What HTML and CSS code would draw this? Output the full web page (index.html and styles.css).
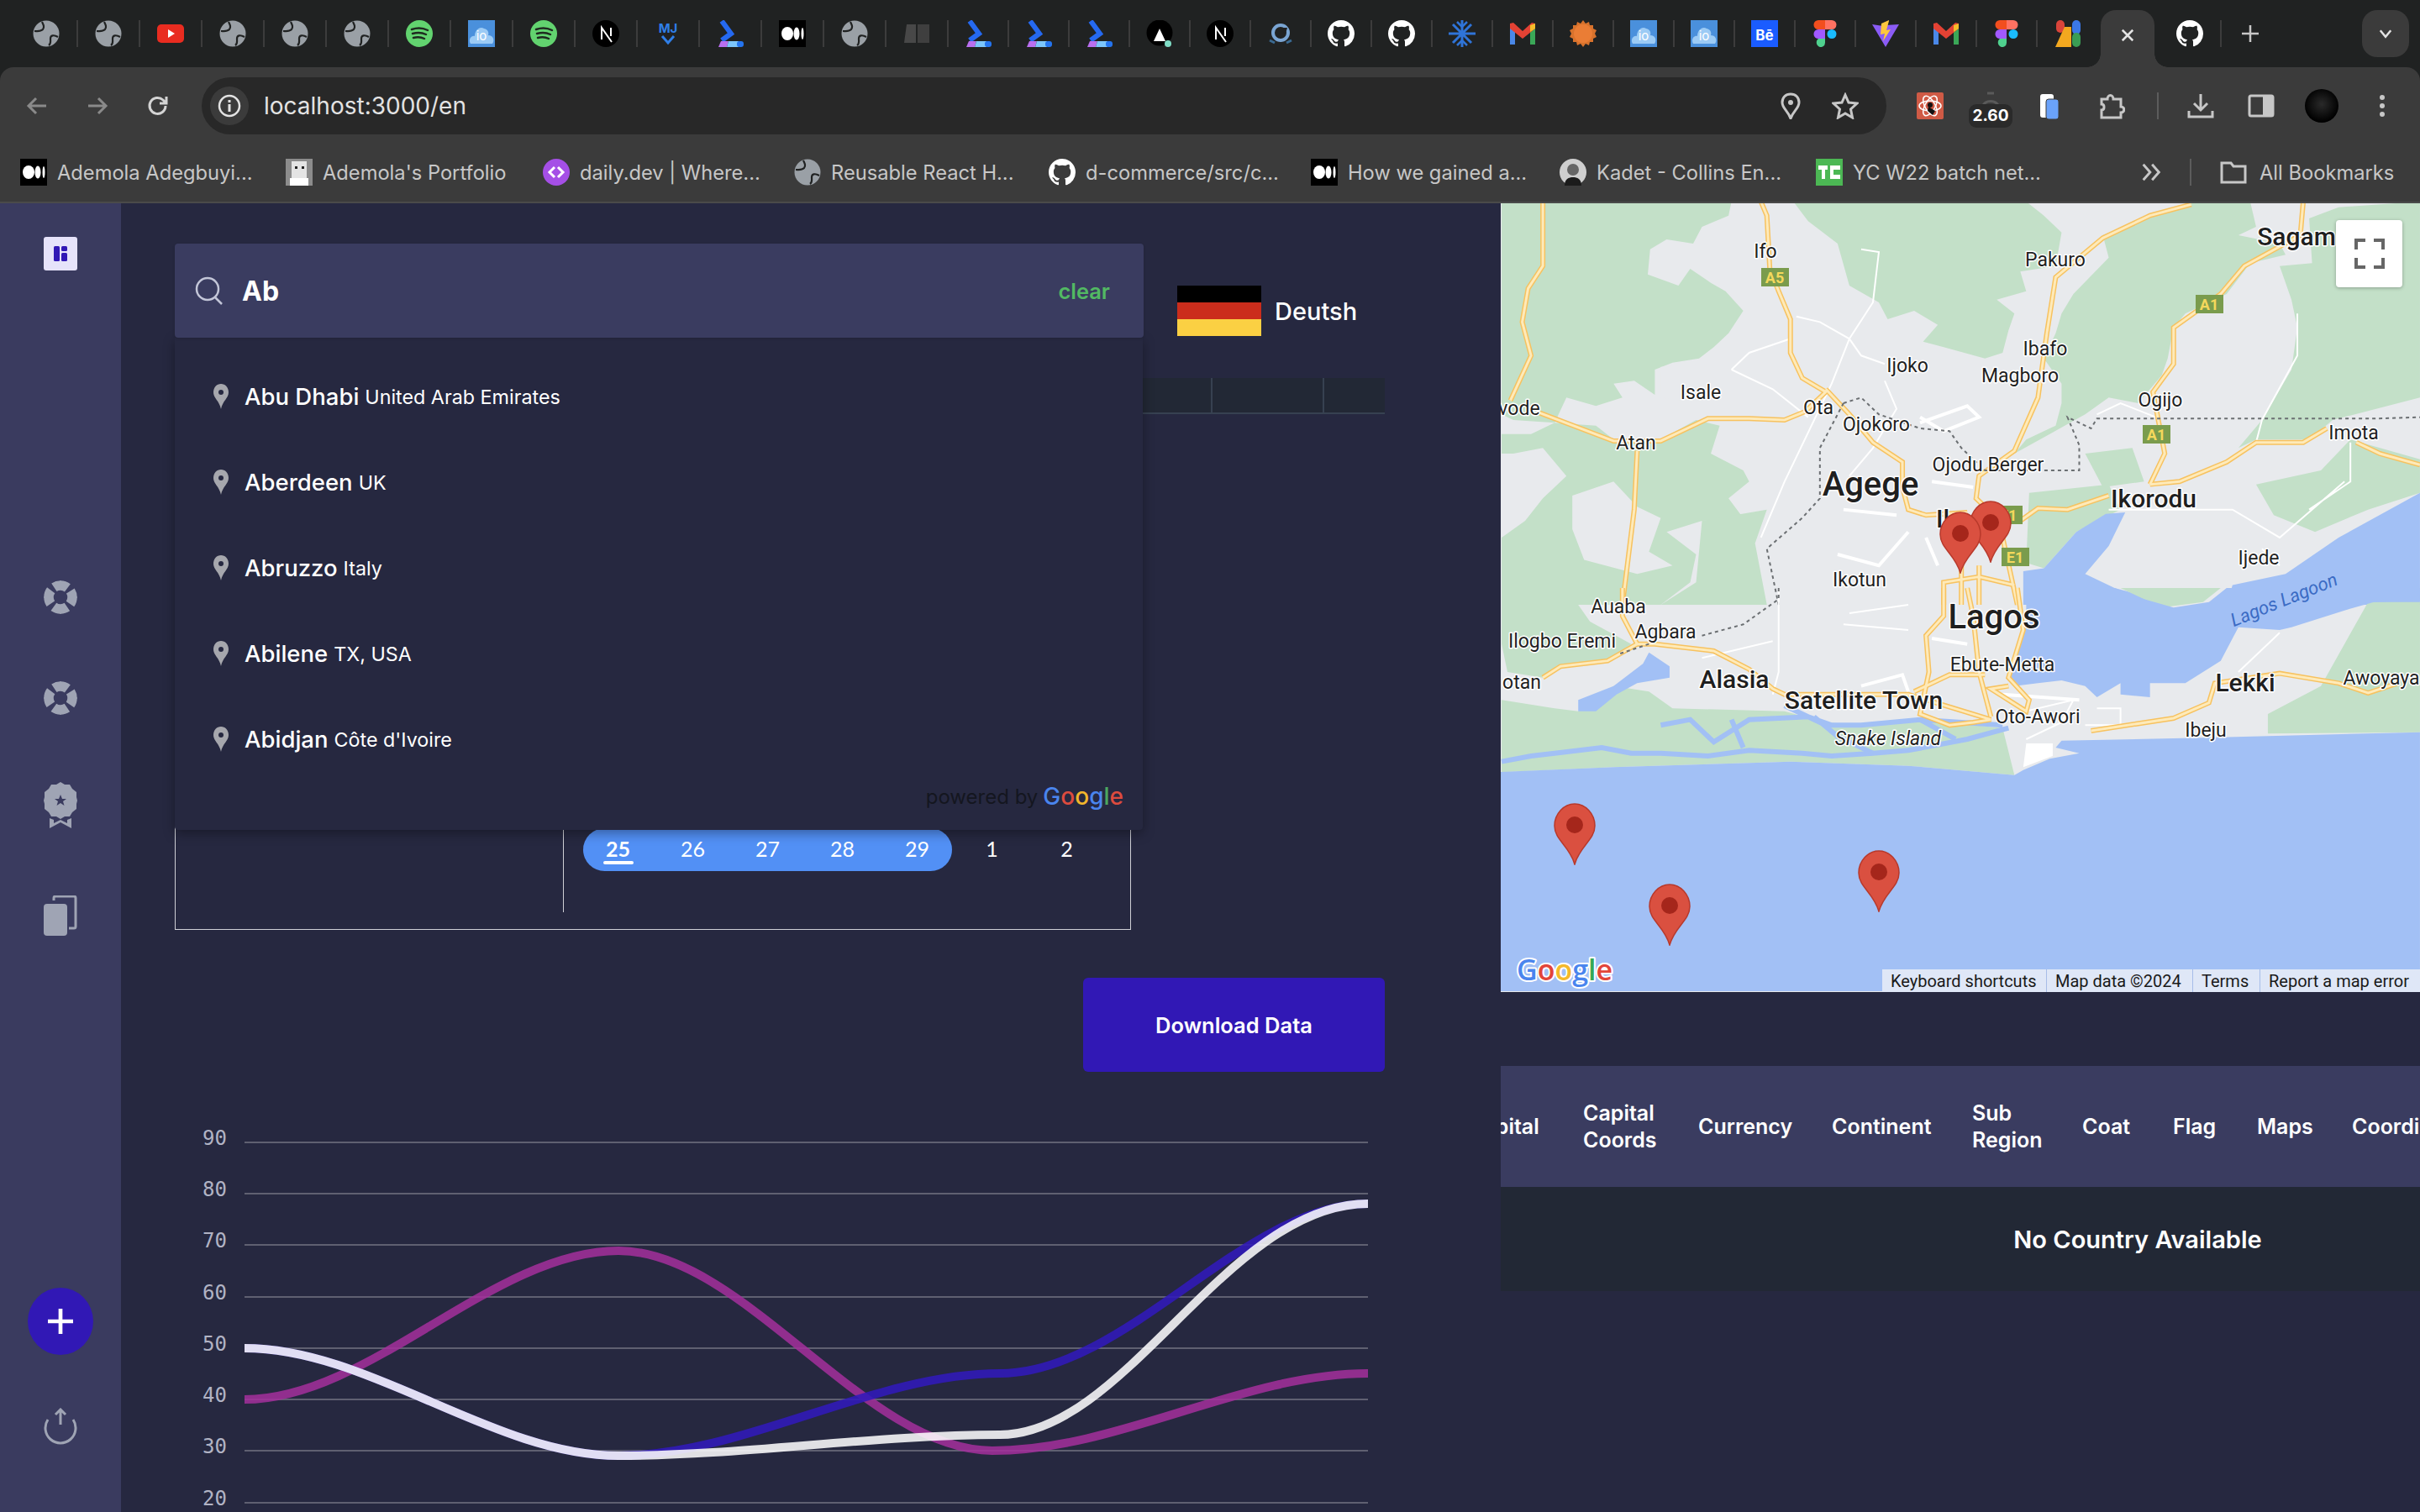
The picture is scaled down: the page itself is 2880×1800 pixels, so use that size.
FILE: index.html
```html
<!DOCTYPE html>
<html lang="en">
<head>
<meta charset="utf-8">
<title>Country dashboard</title>
<link rel="stylesheet" href="styles.css">
</head>
<body>
<svg class="sprites" width="0" height="0" aria-hidden="true">
  <symbol id="i-globe" viewBox="0 0 32 32"><circle cx="16" cy="16" r="15.5" fill="#9aa0a6"/><path d="M11 2c2 4 3 6 1 9-3 3-7 2-10 2M30 20c-5-3-9-2-9 2 0 4 1 6-2 8" fill="none" stroke="#202222" stroke-width="2.200"/><circle cx="16" cy="16" r="14" fill="none" stroke="#202222" stroke-width="0"/></symbol>
  <symbol id="i-yt" viewBox="0 0 32 32"><rect y="5" width="32" height="22" rx="5" fill="#e92c20"/><path d="M13 11l8 5-8 5z" fill="#fff"/></symbol>
  <symbol id="i-spotify" viewBox="0 0 32 32"><circle cx="16" cy="16" r="16" fill="#62d36f"/><path d="M7 11c6-2 13-2 19 1M8 16c5-1.500 11-1.500 16 1M9 21c4-1 9-1 13 1" fill="none" stroke="#1f2a20" stroke-width="2.500" stroke-linecap="round"/></symbol>
  <symbol id="i-io" viewBox="0 0 32 32"><rect width="32" height="32" fill="#4a90dc"/><path d="M3 28c-3-5 1-10 5-9 0-7 6-12 11-9 5 1 6 5 5 8 6 0 8 6 5 10z" fill="#9ccbf5"/></symbol>
  <symbol id="i-next" viewBox="0 0 32 32"><circle cx="16" cy="16" r="16" fill="#000"/><path d="M11 23V9l12 17M22 9v10" fill="none" stroke="#fff" stroke-width="2"/></symbol>
  <symbol id="i-tail" viewBox="0 0 32 32"><path d="M6 1l11 15L6 24" fill="none" stroke="#2569f0" stroke-width="6"/><path d="M2 32l3-7h9l-2 7z" fill="#b96ff0"/><path d="M12 32l2-7h12v7z" fill="#7cc6fb"/><rect x="24" y="25" width="8" height="7" rx="3" fill="#2474ef"/></symbol>
  <symbol id="i-medium" viewBox="0 0 32 32"><rect width="32" height="32" fill="#000"/><ellipse cx="10" cy="16" rx="7" ry="8" fill="#fff"/><ellipse cx="21" cy="16" rx="3.500" ry="7.500" fill="#fff"/><ellipse cx="28" cy="16" rx="1.500" ry="7" fill="#fff"/></symbol>
  <symbol id="i-gray" viewBox="0 0 32 32"><path d="M1 27L4 5h11v22z" fill="#484848"/><path d="M17 5h14v22H17z" fill="#3f3f3f"/></symbol>
  <symbol id="i-a" viewBox="0 0 32 32"><circle cx="16" cy="15" r="15.500" fill="#000"/><path d="M16 10l7 15H9z" fill="#fff"/><circle cx="26" cy="28" r="4" fill="#7fdcc5"/></symbol>
  <symbol id="i-spin" viewBox="0 0 32 32"><circle cx="16" cy="15" r="9" fill="none" stroke="#7aa5d3" stroke-width="4"/><path d="M3 24l6 3M29 24l-6 3" fill="none" stroke="#3a6a92" stroke-width="3"/><path d="M16 9l8 0-2 7-5-3z" fill="#202222"/></symbol>
  <symbol id="i-gh" viewBox="0 0 16 16"><path fill="#fff" d="M8 0C3.580 0 0 3.580 0 8c0 3.540 2.290 6.530 5.470 7.630.4.070.55-.17.55-.38 0-.19-.01-.82-.01-1.490-2.010.37-2.530-.49-2.690-.94-.09-.23-.48-.94-.82-1.130-.28-.15-.68-.52-.01-.53.63-.01 1.080.58 1.230.82.72 1.210 1.870.87 2.330.66.070-.52.28-.87.51-1.070-1.780-.2-3.640-.89-3.640-3.950 0-.87.31-1.590.82-2.150-.08-.2-.36-1.020.08-2.120 0 0 .67-.21 2.200.82.64-.18 1.320-.27 2-.27.68 0 1.360.09 2 .27 1.530-1.040 2.200-.82 2.200-.82.44 1.100.16 1.920.08 2.120.51.56.82 1.270.82 2.150 0 3.070-1.870 3.750-3.650 3.950.29.25.54.73.54 1.480 0 1.070-.01 1.930-.01 2.200 0 .21.15.46.55.38A8.013 8.013 0 0016 8c0-4.420-3.580-8-8-8z"/></symbol>
  <symbol id="i-snow" viewBox="0 0 32 32"><g fill="none" stroke="#2f74d8" stroke-width="3"><path d="M16 0v32M0 16h32M5 5l22 22M27 5L5 27"/></g><path d="M10 2l6 6 6-6M10 30l6-6 6 6" fill="none" stroke="#2f74d8" stroke-width="2.500"/></symbol>
  <symbol id="i-gmail" viewBox="0 0 32 32"><path d="M1 9v20h6V13z" fill="#4a88e8"/><path d="M31 9v20h-6V13z" fill="#3aa757"/><path d="M1 4v6l15 12 15-12V4l-4-1-11 10L5 3z" fill="#e34234"/><path d="M25 6l6-2v6l-6 4z" fill="#f4bd2a"/></symbol>
  <symbol id="i-sun" viewBox="0 0 32 32"><path d="M16 0l3 4 4-2 1 4 4 0 0 4 4 2-2 4 2 4-4 2 0 4-4 0-1 4-4-2-3 4-3-4-4 2-1-4-4 0 0-4-4-2 2-4-2-4 4-2 0-4 4 0 1-4 4 2z" fill="#d8722c"/><circle cx="16" cy="16" r="11" fill="#ea7d35"/></symbol>
  <symbol id="i-be" viewBox="0 0 32 32"><rect width="32" height="32" fill="#1a5cff"/></symbol>
  <symbol id="i-figma" viewBox="0 0 32 32"><path d="M8 0h8v11H8a5.500 5.500 0 010-11z" fill="#f24e1e"/><path d="M16 0h8a5.500 5.500 0 010 11h-8z" fill="#ff7262"/><path d="M8 11h8v11H8a5.500 5.500 0 010-11z" fill="#a259ff"/><circle cx="24" cy="16.500" r="5.500" fill="#1abcfe"/><path d="M8 22h8v5a5 5 0 01-8 4c-3-2-3-7 0-9z" fill="#4fd18e"/></symbol>
  <symbol id="i-vite" viewBox="0 0 32 32"><path d="M0 5l13 2 3-1 16-1-16 27z" fill="#8b5cf6"/><path d="M20 0l-9 4-1 13 5-1-2 9 9-14-5 1 3-11z" fill="#ffc83d"/></symbol>
  <symbol id="i-colors" viewBox="0 0 32 32"><rect x="2" y="0" width="10" height="15" rx="5" fill="#d9443a"/><path d="M1 32l11-24h8v24z" fill="#f3a81f"/><rect x="21" y="0" width="10" height="17" rx="5" fill="#3b78e7"/><rect x="21" y="15" width="10" height="17" rx="5" fill="#3a9d54"/></symbol>
  <symbol id="i-face" viewBox="0 0 32 32"><rect width="32" height="32" fill="#8c8c8c"/><rect x="7" y="3" width="18" height="20" fill="#e4e4e4"/><rect x="11" y="9" width="3" height="3" fill="#222"/><rect x="19" y="9" width="3" height="3" fill="#222"/><rect x="5" y="23" width="22" height="9" fill="#fff"/></symbol>
  <symbol id="i-daily" viewBox="0 0 32 32"><circle cx="16" cy="16" r="16" fill="#a54fe6"/><path d="M14 10l-6 6 6 6M18 10l6 6-6 6" fill="none" stroke="#fff" stroke-width="3"/></symbol>
  <symbol id="i-kadet" viewBox="0 0 32 32"><circle cx="16" cy="16" r="16" fill="#cfcfcf"/><circle cx="16" cy="13" r="7" fill="#666"/><path d="M6 32c0-8 5-10 10-10s10 2 10 10z" fill="#1b1b1b"/></symbol>
  <symbol id="i-tc" viewBox="0 0 32 32"><rect width="32" height="32" fill="#4cb854"/><path d="M3 8h11v5h-3v11H7V13H3zM17 8h12v5h-8v6h8v5H17z" fill="#fff"/></symbol>
  <symbol id="i-pin" viewBox="0 0 18 30"><path d="M9 0c5 0 9 4 9 10 0 7-7 10-9 20C7 20 0 17 0 10 0 4 4 0 9 0z" fill="#a6a7ad"/><circle cx="9" cy="10" r="3" fill="#262840"/></symbol>
  <symbol id="i-life" viewBox="0 0 40 40"><circle cx="20" cy="20" r="14" fill="none" stroke="#9fa4b4" stroke-width="11.500" stroke-dasharray="17 5" stroke-dashoffset="8.500"/><path d="M14 5l6-5 6 5zM14 35l6 5 6-5zM5 14l-5 6 5 6zM35 14l5 6-5 6z" fill="#9fa4b4"/></symbol>
  <symbol id="i-marker" viewBox="0 0 50 74"><path d="M25 1c13 0 24 12 24 26 0 17-18 24-24 46C19 51 1 44 1 27 1 13 12 1 25 1z" fill="#da5040" stroke="#b8392b" stroke-width="1.500"/><circle cx="25" cy="26" r="10" fill="#a5261b"/></symbol>
</svg>

<header class="chrome">
  <div class="tabstrip">
    <div class="tabs">
      <span class="tab"><svg class="fav"><use href="#i-globe"/></svg></span>
      <span class="tab"><svg class="fav"><use href="#i-globe"/></svg></span>
      <span class="tab"><svg class="fav"><use href="#i-yt"/></svg></span>
      <span class="tab"><svg class="fav"><use href="#i-globe"/></svg></span>
      <span class="tab"><svg class="fav"><use href="#i-globe"/></svg></span>
      <span class="tab"><svg class="fav"><use href="#i-globe"/></svg></span>
      <span class="tab"><svg class="fav"><use href="#i-spotify"/></svg></span>
      <span class="tab"><svg class="fav" viewBox="0 0 32 32"><use href="#i-io"/><text x="16" y="24" class="fav-txt fav-io">io</text></svg></span>
      <span class="tab"><svg class="fav"><use href="#i-spotify"/></svg></span>
      <span class="tab"><svg class="fav"><use href="#i-next"/></svg></span>
      <span class="tab"><svg class="fav" viewBox="0 0 32 32"><text x="16" y="15" class="fav-txt fav-mj">MJ</text><path d="M9 19l7 8 7-8" fill="none" stroke="#2f7fe8" stroke-width="3"/></svg></span>
      <span class="tab"><svg class="fav"><use href="#i-tail"/></svg></span>
      <span class="tab"><svg class="fav"><use href="#i-medium"/></svg></span>
      <span class="tab"><svg class="fav"><use href="#i-globe"/></svg></span>
      <span class="tab"><svg class="fav"><use href="#i-gray"/></svg></span>
      <span class="tab"><svg class="fav"><use href="#i-tail"/></svg></span>
      <span class="tab"><svg class="fav"><use href="#i-tail"/></svg></span>
      <span class="tab"><svg class="fav"><use href="#i-tail"/></svg></span>
      <span class="tab"><svg class="fav"><use href="#i-a"/></svg></span>
      <span class="tab"><svg class="fav"><use href="#i-next"/></svg></span>
      <span class="tab"><svg class="fav"><use href="#i-spin"/></svg></span>
      <span class="tab"><svg class="fav"><use href="#i-gh"/></svg></span>
      <span class="tab"><svg class="fav"><use href="#i-gh"/></svg></span>
      <span class="tab"><svg class="fav"><use href="#i-snow"/></svg></span>
      <span class="tab"><svg class="fav"><use href="#i-gmail"/></svg></span>
      <span class="tab"><svg class="fav"><use href="#i-sun"/></svg></span>
      <span class="tab"><svg class="fav" viewBox="0 0 32 32"><use href="#i-io"/><text x="16" y="24" class="fav-txt fav-io">io</text></svg></span>
      <span class="tab"><svg class="fav" viewBox="0 0 32 32"><use href="#i-io"/><text x="16" y="24" class="fav-txt fav-io">io</text></svg></span>
      <span class="tab"><svg class="fav" viewBox="0 0 32 32"><use href="#i-be"/><text x="16" y="24" class="fav-txt fav-be">Bē</text></svg></span>
      <span class="tab"><svg class="fav"><use href="#i-figma"/></svg></span>
      <span class="tab"><svg class="fav"><use href="#i-vite"/></svg></span>
      <span class="tab"><svg class="fav"><use href="#i-gmail"/></svg></span>
      <span class="tab"><svg class="fav"><use href="#i-figma"/></svg></span>
      <span class="tab tab-last"><svg class="fav"><use href="#i-colors"/></svg></span>
    </div>
    <div class="tab-active">
      <svg class="ic-close" viewBox="0 0 16 16"><path d="M3 3l10 10M13 3L3 13" stroke="#e3e3e3" stroke-width="2" fill="none"/></svg>
    </div>
    <span class="tab tab-gh"><svg class="fav"><use href="#i-gh"/></svg></span>
    <svg class="ic-plus" viewBox="0 0 24 24"><path d="M12 2v20M2 12h20" stroke="#c7c7c7" stroke-width="2.500" fill="none"/></svg>
    <div class="tab-search">
      <svg class="ic-chev" viewBox="0 0 16 16"><path d="M3 5l5 6 5-6" stroke="#e3e3e3" stroke-width="2" fill="none"/></svg>
    </div>
  </div>

  <div class="toolbar">
    <span class="slot first-slot"><svg class="tool dim" viewBox="0 0 28 28"><path d="M25 14H4M13 5l-9 9 9 9" fill="none" stroke="#8a8a8a" stroke-width="3"/></svg></span>
    <span class="slot"><svg class="tool dim" viewBox="0 0 28 28"><path d="M3 14h21M15 5l9 9-9 9" fill="none" stroke="#8a8a8a" stroke-width="3"/></svg></span>
    <span class="slot"><svg class="tool" viewBox="0 0 28 28"><path d="M23 14a9.500 9.500 0 11-3-7l3 3M24 3v8h-8" fill="none" stroke="#d4d4d4" stroke-width="3"/></svg></span>
    <div class="url">
      <span class="url-info"><svg class="tool" viewBox="0 0 28 28"><circle cx="14" cy="14" r="12" fill="none" stroke="#e3e3e3" stroke-width="2.500"/><path d="M14 12v9M14 7v3" stroke="#e3e3e3" stroke-width="3"/></svg></span>
      <span class="url-text">localhost:3000/en</span>
      <svg class="tool url-pin" viewBox="0 0 28 32"><path d="M14 2c6 0 10 4 10 10 0 7-7 10-10 19C11 22 4 19 4 12 4 6 8 2 14 2z" fill="none" stroke="#c7c7c7" stroke-width="3"/><circle cx="14" cy="12" r="3" fill="#c7c7c7"/></svg>
      <svg class="tool url-star" viewBox="0 0 32 32"><path d="M16 3l4 9 10 1-7.500 7 2 10-8.500-5-8.500 5 2-10L2 13l10-1z" fill="none" stroke="#c7c7c7" stroke-width="3"/></svg>
    </div>
    <div class="ext-group">
      <span class="slot"><svg class="ext" viewBox="0 0 32 32"><rect width="32" height="32" rx="2" fill="#cf5a45"/><g fill="none" stroke="#fff" stroke-width="1.500"><ellipse cx="16" cy="16" rx="13" ry="6"/><ellipse cx="16" cy="16" rx="13" ry="6" transform="rotate(60 16 16)"/><ellipse cx="16" cy="16" rx="13" ry="6" transform="rotate(120 16 16)"/></g><circle cx="16" cy="15" r="3" fill="#111"/><path d="M14 17l8 5-3 5-6-5z" fill="#111"/></svg></span>
      <span class="slot slot-badge"><svg class="ext" viewBox="0 0 32 32"><path d="M6 24a11 11 0 0120 0M12 8h8" fill="none" stroke="#5a5a5a" stroke-width="3"/></svg><span class="badge">2.60</span></span>
      <span class="slot"><svg class="ext" viewBox="0 0 32 32"><rect x="3" y="2" width="16" height="28" rx="3" fill="#fff"/><rect x="10" y="8" width="15" height="24" rx="3" fill="#6aa2fa" stroke="#3b3b3b"/></svg></span>
      <span class="slot"><svg class="ext" viewBox="0 0 32 32"><path d="M4 8h7c0-6 7-6 7 0h9v9c5 0 5 7 0 7v6H4v-9c4 0 4-7 0-7z" fill="none" stroke="#c7c7c7" stroke-width="3"/></svg></span>
      <span class="tool-sep"></span>
      <span class="slot"><svg class="ext" viewBox="0 0 32 32"><path d="M16 2v19M8 13l8 8 8-8" fill="none" stroke="#c7c7c7" stroke-width="3"/><path d="M2 22v7h28v-7" fill="none" stroke="#c7c7c7" stroke-width="3"/></svg></span>
      <span class="slot"><svg class="ext" viewBox="0 0 32 32"><rect x="2" y="4" width="28" height="24" rx="2" fill="none" stroke="#c7c7c7" stroke-width="3"/><rect x="18" y="4" width="12" height="24" fill="#c7c7c7"/></svg></span>
      <span class="slot"><span class="avatar"></span></span>
      <span class="slot"><svg class="ext" viewBox="0 0 32 32"><circle cx="16" cy="6" r="3" fill="#c7c7c7"/><circle cx="16" cy="16" r="3" fill="#c7c7c7"/><circle cx="16" cy="26" r="3" fill="#c7c7c7"/></svg></span>
    </div>
  </div>

  <nav class="bookmarks">
    <a class="bm"><svg class="fav"><use href="#i-medium"/></svg><span>Ademola Adegbuyi...</span></a>
    <a class="bm"><svg class="fav"><use href="#i-face"/></svg><span>Ademola's Portfolio</span></a>
    <a class="bm"><svg class="fav"><use href="#i-daily"/></svg><span>daily.dev | Where...</span></a>
    <a class="bm"><svg class="fav"><use href="#i-globe"/></svg><span>Reusable React H...</span></a>
    <a class="bm"><svg class="fav"><use href="#i-gh"/></svg><span>d-commerce/src/c...</span></a>
    <a class="bm"><svg class="fav"><use href="#i-medium"/></svg><span>How we gained a...</span></a>
    <a class="bm"><svg class="fav"><use href="#i-kadet"/></svg><span>Kadet - Collins En...</span></a>
    <a class="bm"><svg class="fav"><use href="#i-tc"/></svg><span>YC W22 batch net...</span></a>
    <svg class="bm-more" viewBox="0 0 24 24"><path d="M4 4l7 8-7 8M13 4l7 8-7 8" fill="none" stroke="#c7c7c7" stroke-width="2.500"/></svg>
    <span class="bm-sep"></span>
    <a class="bm bm-all"><svg class="fav" viewBox="0 0 32 32"><path d="M2 5h11l3 4h14v19H2z" fill="none" stroke="#c7c7c7" stroke-width="3"/></svg><span>All Bookmarks</span></a>
  </nav>
</header>

<div class="app">
  <aside class="sidebar">
    <span class="logo"><svg class="logo-ic" viewBox="0 0 18 20"><rect x="1" y="1" width="7" height="18" rx="1.500" fill="#3118b5"/><rect x="10" y="1" width="7" height="6" rx="1.500" fill="#3118b5"/><rect x="10" y="9" width="7" height="10" rx="1.500" fill="#3118b5"/></svg></span>
    <div class="side-nav">
      <svg class="side-ic"><use href="#i-life"/></svg>
      <svg class="side-ic"><use href="#i-life"/></svg>
      <svg class="side-badge" viewBox="0 0 40 55"><path d="M20 0l5 3 6 0 3 5 5 4 0 6 1 4-1 4 0 6-5 4-3 5-6 0-5 3-5-3-6 0-3-5-5-4 0-6-1-4 1-4 0-6 5-4 3-5 6 0z" fill="#9fa4b4"/><path d="M20 15l2 5h5l-4 3 1.500 5-4.500-3-4.500 3 1.500-5-4-3h5z" fill="#3a3b5f"/><path d="M7 43v12l13-7 13 7V43l-5 2v4l-8-4-8 4v-4z" fill="#9fa4b4"/></svg>
      <svg class="side-copy" viewBox="0 0 40 48"><path d="M12 6V3a2 2 0 012-2h22a2 2 0 012 2v34a2 2 0 01-2 2h-6" fill="none" stroke="#9fa4b4" stroke-width="3"/><rect y="10" width="28" height="38" rx="4" fill="#9fa4b4"/></svg>
    </div>
    <div class="side-bottom">
      <button class="fab"><svg class="fab-ic" viewBox="0 0 32 32"><path d="M16 0v32M0 16h32" stroke="#fff" stroke-width="5" fill="none"/></svg></button>
      <svg class="side-up" viewBox="0 0 40 44"><path d="M5 14a18 18 0 1030 0" fill="none" stroke="#9fa4b4" stroke-width="3"/><path d="M20 20V2M14 8l6-6 6 6" fill="none" stroke="#9fa4b4" stroke-width="3"/></svg>
    </div>
  </aside>

  <main class="main">
    <div class="head-row">
      <div class="search-wrap">
        <div class="search">
          <svg class="search-ic" viewBox="0 0 34 34"><circle cx="15" cy="15" r="13" fill="none" stroke="#c3c6d8" stroke-width="2.500"/><path d="M24 25l8 8" stroke="#c3c6d8" stroke-width="2.500"/></svg>
          <span class="search-text">Ab</span>
          <span class="search-clear">clear</span>
        </div>
        <div class="dropdown">
          <div class="sug"><svg class="sug-pin"><use href="#i-pin"/></svg><span class="sug-main">Abu Dhabi</span><span class="sug-sub">United Arab Emirates</span></div>
          <div class="sug"><svg class="sug-pin"><use href="#i-pin"/></svg><span class="sug-main">Aberdeen</span><span class="sug-sub">UK</span></div>
          <div class="sug"><svg class="sug-pin"><use href="#i-pin"/></svg><span class="sug-main">Abruzzo</span><span class="sug-sub">Italy</span></div>
          <div class="sug"><svg class="sug-pin"><use href="#i-pin"/></svg><span class="sug-main">Abilene</span><span class="sug-sub">TX, USA</span></div>
          <div class="sug"><svg class="sug-pin"><use href="#i-pin"/></svg><span class="sug-main">Abidjan</span><span class="sug-sub">Côte d'Ivoire</span></div>
          <div class="powered">powered by <span class="gword"><span class="g-b">G</span><span class="g-r">o</span><span class="g-y">o</span><span class="g-b">g</span><span class="g-g">l</span><span class="g-r">e</span></span></div>
        </div>
      </div>
      <div class="lang">
        <span class="flag"><i class="fl-k"></i><i class="fl-r"></i><i class="fl-y"></i></span>
        <span class="lang-name">Deutsh</span>
      </div>
    </div>

    <div class="stat-table"><i></i><i></i><i></i></div>

    <section class="calendar">
      <div class="cal-left"></div>
      <div class="cal-right">
        <div class="week">
          <div class="range">
            <span class="day day-on">25</span><span class="day">26</span><span class="day">27</span><span class="day">28</span><span class="day">29</span>
          </div>
          <span class="day">1</span><span class="day">2</span>
        </div>
      </div>
    </section>

    <button class="download">Download Data</button>

    <svg class="chart" viewBox="208 1340 1440 460">
      <g class="grid">
        <path d="M291 1360H1628M291 1421H1628M291 1482H1628M291 1544H1628M291 1605H1628M291 1666H1628M291 1727H1628M291 1789H1628"/>
      </g>
      <g class="axis">
        <text x="241" y="1355">90</text><text x="241" y="1416">80</text><text x="241" y="1477">70</text><text x="241" y="1539">60</text><text x="241" y="1600">50</text><text x="241" y="1661">40</text><text x="241" y="1722">30</text><text x="241" y="1784">20</text>
      </g>
      <path class="ln ln-p" d="M291 1666C440 1666 587 1489 736 1489C885 1489 1030 1727 1181 1727C1330 1727 1480 1635 1628 1635"/>
      <path class="ln ln-b" d="M291 1605C440 1605 587 1733 736 1733C885 1733 1040 1635 1190 1635C1340 1635 1480 1433 1628 1433"/>
      <path class="ln ln-w" d="M291 1605C440 1605 587 1733 736 1733C885 1733 1040 1708 1190 1708C1340 1708 1460 1433 1628 1433"/>
    </svg>
  </main>

  <section class="right">
    <div class="map">
      <svg class="map-svg" viewBox="1786 242 1094 939">
        <defs>
          <g id="roads6">
            <path d="M80 0V230L55 310 45 430 60 550 25 710"/>
            <path d="M75 755L200 855H280L360 775 430 775 490 780 525 750 560 680 520 630 500 540V420L480 320 465 240 460 50 450 0"/>
            <path d="M240 890L235 1100 215 1440"/>
            <path d="M560 670L600 760 640 860 690 930V1020L700 1100 730 1120 800 1110"/>
            <path d="M1180 10L1110 50 1030 130 950 270 935 470 920 700 880 890 820 980 815 1060 830 1090"/>
            <path d="M1370 0L1365 120 1270 230 1230 330 1150 450V580L1115 680 1135 900 1110 1010"/>
            <path d="M1040 1050L970 1100 920 1095 890 1140M1110 1010L1160 1000 1240 930 1290 860H1370L1410 810M1460 860L1500 900 1568 940"/>
            <path d="M860 1200L885 1440M820 1340L760 1360V1440M790 1300V1440M820 1300V1440M820 1340L880 1370"/>
          </g>
          <g id="roads7">
            <path d="M215 0V100L240 200 270 200 370 225 430 290 470 360 490 380 700 380 840 470 810 480 770 490 720 450 735 300 730 170 760 100V0"/>
            <path d="M800 0L810 100 820 300 840 460M885 0L895 150 870 320 905 400 900 440 840 360 870 350M710 370L770 310H830"/>
            <path d="M80 320L110 280 190 260 240 200M1010 510L1150 465 1210 410 1220 340 1330 305 1430 340 1480 375 1530 340"/>
          </g>
        </defs>
        <rect x="1786" y="242" width="1094" height="939" class="land"/>

        <g transform="translate(1780 240) scale(.7015 .3333)">
          <g class="green">
            <path d="M10 0H400L395 50 350 90 335 150 290 135 262 170 258 260 310 300 330 240 365 290 390 320 420 390 395 470 370 520 345 560 300 575 270 600V690L235 640 200 650 215 700 170 730 120 700 100 790 30 780 10 760Z"/>
            <path d="M10 830H60L100 790 170 800 200 850 230 860 280 850 340 780 380 800 365 900 420 960 430 1000 395 1060 420 1130 350 1140 290 1180 340 1260 330 1360 280 1440H10Z"/>
            <path d="M505 0H900L930 50 960 110 950 230 890 250 900 320 850 350 880 400 870 460 860 540 830 560 760 520 725 500 750 440 710 390 665 420 650 360 600 300 580 150 530 70Z"/>
            <path d="M1100 60L1030 120 1040 200 980 330 960 400 950 470 930 560 960 650V720L950 800 900 850 880 900 940 830 1000 760 1040 700 1090 720 1130 620 1140 560 1150 450 1170 400 1240 330 1280 220 1340 190 1330 150 1260 120 1290 90 1280 0H1190Z"/>
            <path d="M1380 60L1430 20 1568 0V700L1420 780 1380 850H1290L1260 880 1300 780 1350 600 1360 450 1350 350 1330 230 1385 220Z"/>
            <path d="M905 1040L1040 1010 1060 1100 1030 1130 985 1180 930 1310 900 1290Z"/>
            <path d="M1290 1010L1320 1120 1390 1180 1480 1100 1568 1040V920L1450 850 1400 960Z"/>
            <path d="M1000 900L1080 880 1100 1000 1030 1020Z"/>
            <path d="M350 1140L460 1100 440 1220 460 1440H280L340 1360Z"/>
          </g>
          <g class="gray-patch">
            <path d="M130 1050L200 1000 240 1090 280 1130 260 1250 300 1300 240 1330 150 1280 130 1170Z"/>
            <path d="M30 900L80 880 120 980 80 1060 50 1140 10 1200V900Z"/>
            <path d="M280 590L350 580 380 650 340 720 280 700Z"/>
          </g>
          <g class="water">
            <path d="M895 1320L930 1310 985 1180 1035 1115 1068 1110 1040 1230 1000 1330 1050 1380 1120 1420 1160 1440H895Z"/>
            <path d="M1240 1440L1250 1370 1340 1330 1430 1200 1568 1040V1440Z"/>
          </g>
          <g class="minor">
            <path d="M510 410L550 430 600 490 620 550 660 580M600 490L570 650 490 1000 450 1200M400 600L470 670 530 770M400 600L430 540 500 490M1360 400V550L1300 780 1290 860M1020 760L1060 720 1120 770M1040 1100H1250L1330 1200 1440 1000M1450 860V1000L1380 1100M620 170L650 180 640 360 600 490M660 640L680 740 640 880 600 980M1300 1240L1330 1300"/>
            <path class="minor-thick" d="M720 790L800 730 820 770 760 820 720 770M590 1100L680 1120M740 1000L810 1020M580 1260L650 1300 700 1180M730 1200L750 1300"/>
          </g>
          <use href="#roads6" class="road-o"/><use href="#roads6" class="road-i"/>
          <path class="border" d="M590 720L620 700 650 760 720 810 770 820 790 880 830 960H990V870L970 770 1010 810 1020 775H1490L1568 770M590 720L550 880V1060L520 1130 460 1240 470 1340 480 1440"/>
        </g>

        <g transform="translate(1780 700) scale(.7015 .3333)">
          <g class="green">
            <path d="M10 400L100 430 140 440 200 350 260 370 300 430 490 440 560 480 620 490 720 470 860 500 880 668 700 635 500 620 200 640 10 658Z"/>
            <path d="M10 0H120L160 120 230 200 190 260 110 280 80 320 20 300 10 200Z"/>
            <path d="M1310 520V450L1400 350 1480 50 1568 50V515Z"/>
            <path d="M1060 0H1230L1200 50 1130 70Z"/>
          </g>
          <g class="water">
            <path d="M900 0H1050L1100 40 1150 70 1210 50 1240 0H1568V45L1490 50 1440 80 1350 140 1330 150 1260 140 1230 260 1170 340 1110 340V390L1060 380V340L1020 390 1000 350 960 330 920 340 880 350 870 310 900 130Z"/>
            <path d="M140 440V400L200 350 250 270 260 230 295 280V320L240 340 205 380 170 440Z"/>
            <path d="M0 658L200 640 500 620 700 635 880 668 895 650 940 610 990 590 950 570 960 545 1200 535 1568 515V1440H0Z"/>
          </g>
          <path class="beach" d="M895 640L900 555H945V600Z"/>
          <g class="river">
            <path d="M10 620L60 600 100 590 180 570 230 590 280 590 360 600 430 580 520 590 570 600 640 590 700 580 800 540 870 500"/>
            <path d="M280 490L330 470 370 550 430 470 530 460 570 490M490 420L560 490 620 490 720 470 860 490M540 460L580 530 640 590M720 470L780 540M400 470L420 570"/>
          </g>
          <g class="minor">
            <path d="M480 0V300L470 380M350 250L470 190M600 90L700 60M590 130L700 150M1020 430H1060V490H1000M900 540L960 480 980 400 900 440M1260 300L1330 160"/>
            <path class="minor-thick" d="M620 350L690 310 700 370M740 180L800 200M860 380L990 400"/>
          </g>
          <use href="#roads7" class="road-o"/><use href="#roads7" class="road-i"/>
          <path class="border" d="M480 0V40L420 130 350 170M260 200L210 235"/>
        </g>

        <g class="shield">
          <rect x="2096" y="319" width="33" height="22"/><text x="2112" y="330">A5</text>
          <rect x="2613" y="351" width="33" height="22"/><text x="2629" y="362">A1</text>
          <rect x="2550" y="506" width="33" height="22"/><text x="2566" y="517">A1</text>
          <rect x="2382" y="652" width="33" height="22"/><text x="2398" y="663">E1</text>
          <rect x="2374" y="602" width="33" height="22"/><text x="2390" y="613">E1</text>
        </g>

        <g class="lbl">
          <text x="2101" y="299">Ifo</text><text x="2446" y="309">Pakuro</text><text x="2434" y="415">Ibafo</text><text x="2404" y="447">Magboro</text><text x="2270" y="435">Ijoko</text><text x="2024" y="467">Isale</text><text x="2164" y="485">Ota</text><text x="2233" y="505">Ojokoro</text><text x="2571" y="476">Ogijo</text><text x="2801" y="515">Imota</text><text x="1947" y="527">Atan</text><text x="1808" y="486">vode</text><text x="2366" y="553">Ojodu Berger</text><text x="2688" y="664">Ijede</text><text x="2213" y="690">Ikotun</text><text x="1926" y="722">Auaba</text><text x="1982" y="752">Agbara</text><text x="1859" y="763">Ilogbo Eremi</text><text x="1811" y="812">otan</text><text x="2383" y="791">Ebute-Metta</text><text x="2834" y="807">Awoyaya</text><text x="2425" y="853">Oto-Awori</text><text x="2625" y="869">Ibeju</text>
          <text x="2247" y="879" class="lbl-it">Snake Island</text>
        </g>
        <g class="lbl lbl-m">
          <text x="2733" y="281">Sagam</text><text x="2563" y="593">Ikorodu</text><text x="2312" y="617">Il</text><text x="2064" y="808">Alasia</text><text x="2218" y="833">Satellite Town</text><text x="2672" y="812">Lekki</text>
        </g>
        <g class="lbl lbl-l">
          <text x="2226" y="576">Agege</text><text x="2373" y="734">Lagos</text>
        </g>
        <text class="lbl-water" transform="translate(2718 714) rotate(-22)">Lagos Lagoon</text>

        <use href="#i-marker" x="2344" y="596" width="50" height="74"/>
        <use href="#i-marker" x="2308" y="609" width="50" height="74"/>
        <use href="#i-marker" x="1849" y="956" width="50" height="74"/>
        <use href="#i-marker" x="1962" y="1052" width="50" height="74"/>
        <use href="#i-marker" x="2211" y="1012" width="50" height="74"/>

        <text class="glogo" x="1805" y="1167"><tspan fill="#4a85ee">G</tspan><tspan fill="#e2453a">o</tspan><tspan fill="#f4b92c">o</tspan><tspan fill="#4a85ee">g</tspan><tspan fill="#34a853">l</tspan><tspan fill="#e2453a">e</tspan></text>
      </svg>
      <button class="map-full"><svg class="map-full-ic" viewBox="0 0 36 36"><path d="M2 13V2h11M23 2h11v11M34 23v11H23M13 34H2V23" fill="none" stroke="#666" stroke-width="4"/></svg></button>
      <div class="attrib">
        <span class="at-a">Keyboard shortcuts</span><span class="at-b">Map data ©2024</span><span class="at-c">Terms</span><span class="at-d">Report a map error</span>
      </div>
    </div>

    <div class="country-table">
      <div class="ct-head">
        <span>Capital</span><span>Capital<br>Coords</span><span>Currency</span><span>Continent</span><span>Sub<br>Region</span><span>Coat</span><span>Flag</span><span>Maps</span><span>Coordinates</span>
      </div>
      <div class="ct-body">No Country Available</div>
    </div>
  </section>
</div>
</body>
</html>
```

FILE: styles.css
```css
* { box-sizing: border-box; }
html, body { margin: 0; padding: 0; }
body {
  width: 2880px; height: 1800px; overflow: hidden;
  background: #262840; color: #fff;
  font-family: Inter, "Noto Sans", sans-serif;
  display: flex; flex-direction: column;
}
.sprites { position: absolute; }
.fav-txt { font-family: Inter, sans-serif; text-anchor: middle; }
.fav-io { font-size: 15px; fill: #fff; }
.fav-mj { font-size: 15px; font-weight: 700; fill: #2f7fe8; }
.fav-be { font-size: 17px; font-weight: 700; fill: #fff; }

/* browser chrome */
.chrome { background: #202222; height: 242px; flex: none; border-bottom: 2px solid #4a4a4a; display: flex; flex-direction: column; }
.tabstrip { height: 80px; display: flex; align-items: flex-start; flex: none; }
.tabs { display: flex; padding-left: 19px; width: 2500px; padding-top: 24px; flex: none; }
.tab { width: 72px; height: 32px; flex: none; display: flex; align-items: center; justify-content: center; border-right: 2px solid #3c3c3c; }
.tab:nth-child(-n+15) { width: 74px; }
.tab-last { border-right: none; }
.fav { width: 32px; height: 32px; flex: none; display: block; }
.tab-active {
  width: 64px; height: 68px; margin-top: 12px; background: #3b3b3b; border-radius: 18px 18px 0 0;
  display: flex; align-items: flex-start; justify-content: center; padding-top: 18px; position: relative; flex: none;
}
.tab-active::before, .tab-active::after { content: ""; position: absolute; bottom: 0; width: 16px; height: 16px; }
.tab-active::before { left: -16px; background: radial-gradient(circle at 0 0, transparent 15.500px, #3b3b3b 16px); }
.tab-active::after { right: -16px; background: radial-gradient(circle at 100% 0, transparent 15.500px, #3b3b3b 16px); }
.ic-close { width: 20px; height: 20px; margin-top: 2px; }
.tab-gh { margin: 24px 0 0 6px; }
.ic-plus { width: 24px; height: 24px; margin: 28px 0 0 22px; flex: none; }
.tab-search { width: 56px; height: 56px; margin: 12px 13px 0 auto; background: #3b3b3b; border-radius: 18px; display: flex; align-items: center; justify-content: center; }
.ic-chev { width: 20px; height: 20px; }

.toolbar { height: 90px; flex: none; background: #3b3b3b; border-radius: 16px 16px 0 0; display: flex; align-items: flex-start; padding: 12px 0 0 8px; }
.slot { width: 72px; height: 68px; flex: none; display: flex; align-items: center; justify-content: center; position: relative; }
.tool { width: 28px; height: 28px; flex: none; display: block; }
.url { width: 2005px; height: 68px; margin-left: 16px; background: #282828; border-radius: 34px; display: flex; align-items: center; padding-left: 10px; flex: none; }
.url-info { width: 46px; height: 46px; border-radius: 50%; background: #3b3b3b; display: flex; align-items: center; justify-content: center; flex: none; }
.url-text { margin-left: 18px; font-size: 28px; color: #e3e3e3; }
.url-pin { margin-left: auto; width: 28px; height: 32px; }
.url-star { margin: 0 33px 0 35px; width: 32px; height: 32px; }
.ext-group { display: flex; align-items: center; margin-left: 16px; height: 68px; }
.ext { width: 32px; height: 32px; display: block; }
.slot-badge .ext { margin-top: -14px; }
.badge { position: absolute; left: 10px; top: 32px; width: 52px; height: 28px; background: #2a2a2a; border-radius: 9px; font-size: 19px; font-weight: 700; color: #fff; text-align: center; line-height: 28px; }
.tool-sep { width: 2px; height: 32px; background: #5c5c5c; margin: 0 14px 0 18px; flex: none; }
.avatar { width: 40px; height: 40px; border-radius: 50%; background: radial-gradient(circle at 50% 45%, #2a2a2a, #000 70%); }

.bookmarks { height: 70px; flex: none; background: #3b3b3b; display: flex; align-items: center; padding: 0 0 0 24px; font-size: 23.7px; color: #c7c7c7; }
.bm { display: flex; align-items: center; gap: 12px; white-space: nowrap; flex: none; }
.bm:nth-child(1) { width: 316px; }
.bm:nth-child(2) { width: 306px; }
.bm:nth-child(3) { width: 299px; }
.bm:nth-child(4) { width: 303px; }
.bm:nth-child(5) { width: 312px; }
.bm:nth-child(6) { width: 296px; }
.bm:nth-child(7) { width: 305px; }
.bm:nth-child(8) { width: 385px; }
.bm-more { width: 28px; height: 28px; flex: none; }
.bm-sep { width: 2px; height: 32px; background: #5c5c5c; margin: 0 34px 0 32px; flex: none; }
.bm-all { gap: 15px; }

/* application */
.app { flex: 1; min-height: 0; display: flex; overflow: hidden; }
.sidebar { width: 144px; flex: none; background: #3a3b5f; display: flex; flex-direction: column; align-items: center; padding: 40px 0 80px; }
.logo { width: 40px; height: 40px; background: #e6e3fa; border-radius: 3px; display: flex; align-items: center; justify-content: center; flex: none; }
.logo-ic { width: 18px; height: 20px; }
.side-nav { margin-top: 369px; display: flex; flex-direction: column; align-items: center; gap: 80px; }
.side-ic { width: 40px; height: 40px; display: block; }
.side-badge { width: 40px; height: 55px; display: block; }
.side-copy { width: 40px; height: 48px; display: block; }
.side-bottom { margin-top: auto; display: flex; flex-direction: column; align-items: center; gap: 63px; }
.fab { width: 78px; height: 80px; border-radius: 50%; border: none; background: #3118b5; display: flex; align-items: center; justify-content: center; padding: 0; }
.fab-ic { width: 30px; height: 32px; }
.side-up { width: 40px; height: 44px; display: block; }

.main { width: 1642px; flex: none; padding: 48px 138px 0 64px; display: flex; flex-direction: column; overflow: hidden; }
.head-row { display: flex; align-items: flex-end; flex: none; position: relative; z-index: 2; }
.search-wrap { position: relative; width: 1153px; flex: none; }
.search { height: 112px; background: #3a3c60; border-radius: 4px; display: flex; align-items: center; padding: 0 40px 0 24px; box-shadow: 0 1px 3px rgba(0,0,0,.15); position: relative; z-index: 1; }
.search-ic { width: 34px; height: 34px; flex: none; }
.search-text { margin-left: 22px; font-size: 32px; font-weight: 700; }
.search-clear { margin-left: auto; font-size: 25.5px; font-weight: 600; color: #52b963; }
.dropdown {
  position: absolute; left: 0; top: 100%; width: 1152px; height: 586px;
  background: #262840; border-radius: 0 0 4px 4px; box-shadow: 0 4px 14px rgba(0,0,0,.35);
  padding-top: 19px; display: flex; flex-direction: column;
}
.sug { height: 102px; display: flex; align-items: center; padding-left: 46px; flex: none; }
.sug-pin { width: 18px; height: 30px; flex: none; }
.sug-main { margin-left: 19px; font-size: 27.5px; font-weight: 500; }
.sug-sub { margin-left: 7px; font-size: 23.3px; }
.powered { align-self: flex-end; margin-right: 23px; font-size: 24px; color: #14161f; display: flex; align-items: center; gap: 6px; }
.gword { font-size: 28px; font-weight: 500; }
.g-b { color: #4a85ee; } .g-r { color: #dc4b3e; } .g-y { color: #f1b62c; } .g-g { color: #4ca860; }

.lang { display: flex; align-items: center; margin: 0 0 2px 40px; gap: 16px; }
.flag { width: 100px; height: 60px; display: flex; flex-direction: column; flex: none; }
.flag i { flex: 1; display: block; }
.fl-k { background: #000; } .fl-r { background: #cb2d1c; } .fl-y { background: #fbd043; }
.lang-name { font-size: 29px; font-weight: 500; }

.stat-table { height: 43px; margin-top: 48px; background: #222835; border-bottom: 2px solid #374151; display: flex; justify-content: flex-end; flex: none; }
.stat-table i { display: block; border-left: 2px solid #374151; }
.stat-table i:first-child { width: 0; border: none; }
.stat-table i:nth-child(2) { width: 133px; }
.stat-table i:nth-child(3) { width: 74px; }

.calendar { width: 1138px; height: 587px; margin-top: 27px; border: 1px solid #cfd0d6; border-top: none; display: flex; padding-bottom: 20px; flex: none; }
.cal-left { width: 462px; border-right: 1px solid #cfd0d6; flex: none; }
.cal-right { flex: 1; padding: 466px 0 0 20px; }
.week { display: flex; height: 51px; align-items: center; }
.range { display: flex; align-items: center; height: 51px; margin: 0 3px; background: #5290f5; border-radius: 26px; flex: none; }
.range .day:first-child { margin-left: -3px; }
.range .day:last-child { margin-right: -3px; }
.day { width: 89px; flex: none; text-align: center; font-family: Lato, sans-serif; font-size: 25px; color: #fff; padding-bottom: 3px; }
.day-on { font-weight: 700; position: relative; }
.day-on::after { content: ""; position: absolute; left: 27px; right: 26px; bottom: -1px; height: 4px; border-radius: 2px; background: #fff; }

.download { align-self: flex-end; width: 359px; height: 112px; margin-top: 57px; border: none; border-radius: 6px; background: #3118b5; color: #fff; font-family: inherit; font-size: 25.5px; font-weight: 600; flex: none; }

.chart { width: 1440px; height: 460px; margin-top: 64px; flex: none; display: block; }
.grid path { stroke: #5f6071; stroke-width: 2; fill: none; }
.axis text { font-family: "DejaVu Sans Mono", monospace; font-size: 24px; fill: #b1b3c4; dominant-baseline: central; }
.ln { fill: none; stroke-width: 10; }
.ln-p { stroke: #a52f9c; stroke-opacity: .85; }
.ln-b { stroke: #3119ba; stroke-opacity: .88; }
.ln-w { stroke: #fff; stroke-opacity: .86; }

/* right column */
.right { flex: 1; min-width: 0; display: flex; flex-direction: column; }
.map { height: 939px; position: relative; flex: none; overflow: hidden; }
.map-svg { width: 1094px; height: 939px; display: block; }
.map-svg path { vector-effect: non-scaling-stroke; }
.land { fill: #e8eaed; }
.green path { fill: #c3e0c8; }
.gray-patch path { fill: #e8eaed; }
.water path { fill: #a2c0f5; }
.beach { fill: #fff; }
.river path { fill: none; stroke: #a2c0f5; stroke-width: 6; }
.minor path { fill: none; stroke: #fff; stroke-width: 2; }
.minor .minor-thick { stroke-width: 4; }
.road-o { fill: none; stroke: #f7c25f; stroke-width: 6; }
.road-i { fill: none; stroke: #feeab9; stroke-width: 3; }
.border { fill: none; stroke: #6b6f72; stroke-width: 2; stroke-dasharray: 4 4; }
.shield rect { fill: #7a9c4d; }
.shield text { font-family: Roboto, sans-serif; font-size: 18px; font-weight: 700; fill: #f4d85c; text-anchor: middle; dominant-baseline: central; }
.lbl text { font-family: Roboto, sans-serif; font-size: 23px; fill: #1f1f1f; text-anchor: middle; dominant-baseline: central; paint-order: stroke; stroke: #fff; stroke-width: 3px; stroke-linejoin: round; }
.lbl .lbl-it { font-style: italic; }
.lbl-m text { font-size: 30px; font-weight: 500; }
.lbl-l text { font-size: 40px; font-weight: 500; }
.lbl-water { font-family: Roboto, sans-serif; font-style: italic; font-size: 22px; fill: #3b6bc4; text-anchor: middle; dominant-baseline: central; }
.glogo { font-family: "Open Sans", sans-serif; font-size: 34px; font-weight: 600; paint-order: stroke; stroke: #fff; stroke-width: 4px; stroke-linejoin: round; }
.map-full { position: absolute; top: 20px; right: 21px; width: 79px; height: 80px; background: #fff; border: none; border-radius: 4px; box-shadow: 0 1px 4px rgba(0,0,0,.3); display: flex; align-items: center; justify-content: center; padding: 0; }
.map-full-ic { width: 36px; height: 36px; }
.attrib { position: absolute; right: 0; bottom: 0; width: 640px; height: 27px; background: #dfe7f7; display: flex; align-items: center; font-family: Roboto, sans-serif; font-size: 20px; color: #1a1a1a; white-space: nowrap; }
.attrib span { display: block; height: 27px; line-height: 29px; padding-left: 10px; border-right: 1px solid #a7bde8; flex: none; }
.at-a { width: 196px; }
.at-b { width: 174px; }
.at-c { width: 80px; }
.at-d { width: 190px; border-right: none !important; }

.country-table { margin-top: 88px; flex: none; overflow: hidden; }
.ct-head { height: 144px; background: #3a3c60; display: grid; grid-template-columns: 137px 137px 159px 167px 131px 108px 100px 113px 200px; align-items: center; margin-left: -39px; width: 1200px; font-size: 25px; font-weight: 600; line-height: 32px; white-space: nowrap; }
.ct-body { height: 124px; width: 1516px; background: #222835; display: flex; align-items: center; justify-content: center; font-size: 29px; font-weight: 600; }
```
